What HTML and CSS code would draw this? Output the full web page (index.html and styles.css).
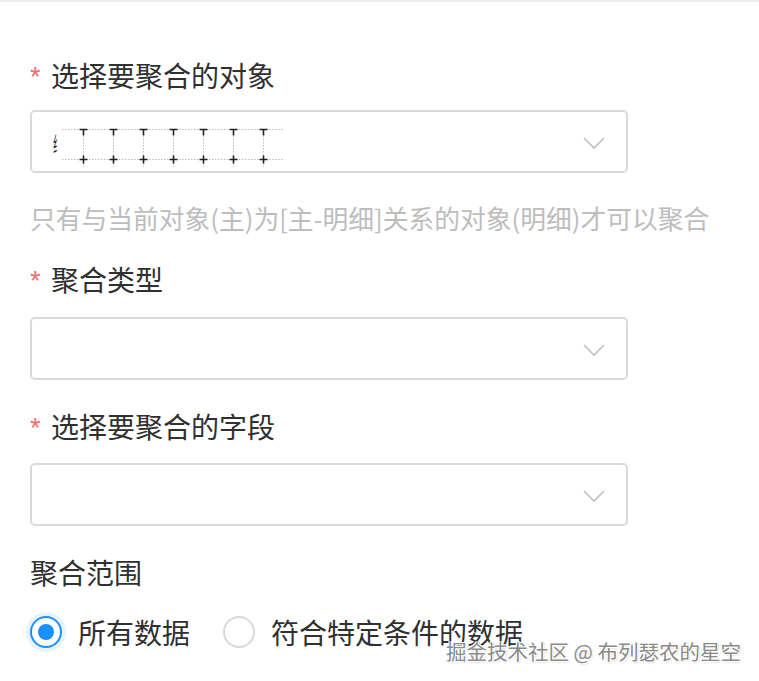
FILE: index.html
```html
<!DOCTYPE html>
<html lang="zh-CN">
<head>
<meta charset="utf-8">
<title>聚合</title>
<link rel="stylesheet" href="styles.css">
</head>
<body>
<div class="topline"></div>
<form class="form">
  <div class="label"><span class="req">*</span>选择要聚合的对象</div>
  <div class="select">
    <div class="value">
      <span class="partial">纟</span>
      <svg class="glitch" width="224" height="42" viewBox="0 0 224 42">
        <g stroke="#bdbdbd" stroke-width="1" stroke-dasharray="1.5 1.5" fill="none">
          <line x1="0" y1="4.5" x2="222" y2="4.5"/>
          <line x1="0" y1="34.5" x2="222" y2="34.5"/>
          <line x1="21.5" y1="5" x2="21.5" y2="42"/>
          <line x1="51.5" y1="5" x2="51.5" y2="42"/>
          <line x1="81.5" y1="5" x2="81.5" y2="42"/>
          <line x1="111.5" y1="5" x2="111.5" y2="42"/>
          <line x1="141.5" y1="5" x2="141.5" y2="42"/>
          <line x1="171.5" y1="5" x2="171.5" y2="42"/>
          <line x1="201.5" y1="5" x2="201.5" y2="42"/>
        </g>
        <g stroke="#222" stroke-width="1.6" fill="none">
          <path d="M17.5 4.5h8M21.5 4.5v6"/>
          <path d="M47.5 4.5h8M51.5 4.5v6"/>
          <path d="M77.5 4.5h8M81.5 4.5v6"/>
          <path d="M107.5 4.5h8M111.5 4.5v6"/>
          <path d="M137.5 4.5h8M141.5 4.5v6"/>
          <path d="M167.5 4.5h8M171.5 4.5v6"/>
          <path d="M197.5 4.5h8M201.5 4.5v6"/>
          <path d="M17.5 34.5h8M21.5 30.5v8"/>
          <path d="M47.5 34.5h8M51.5 30.5v8"/>
          <path d="M77.5 34.5h8M81.5 30.5v8"/>
          <path d="M107.5 34.5h8M111.5 30.5v8"/>
          <path d="M137.5 34.5h8M141.5 30.5v8"/>
          <path d="M167.5 34.5h8M171.5 30.5v8"/>
          <path d="M197.5 34.5h8M201.5 30.5v8"/>
        </g>
      </svg>
    </div>
    <svg class="chev" width="22" height="14" viewBox="0 0 22 14"><path d="M1 2l10 10L21 2" fill="none" stroke="#c0c0c0" stroke-width="1.6"/></svg>
  </div>
  <div class="hint">只有与当前对象(主)为[主-明细]关系的对象(明细)才可以聚合</div>

  <div class="label label-2"><span class="req">*</span>聚合类型</div>
  <div class="select">
    <div class="value"></div>
    <svg class="chev" width="22" height="14" viewBox="0 0 22 14"><path d="M1 2l10 10L21 2" fill="none" stroke="#c0c0c0" stroke-width="1.6"/></svg>
  </div>

  <div class="label label-3"><span class="req">*</span>选择要聚合的字段</div>
  <div class="select">
    <div class="value"></div>
    <svg class="chev" width="22" height="14" viewBox="0 0 22 14"><path d="M1 2l10 10L21 2" fill="none" stroke="#c0c0c0" stroke-width="1.6"/></svg>
  </div>

  <div class="label label-plain">聚合范围</div>
  <div class="radios">
    <label class="radio checked"><span class="dot"></span>所有数据</label>
    <label class="radio"><span class="dot"></span>符合特定条件的数据</label>
  </div>
</form>
<div class="watermark">掘金技术社区 @ 布列瑟农的星空</div>
</body>
</html>
```
FILE: styles.css
```css
html, body {
  margin: 0;
  padding: 0;
  background: #ffffff;
}
body {
  font-family: "Noto Sans CJK SC", "Noto Sans", sans-serif;
  color: #333333;
  width: 759px;
  height: 681px;
  overflow: hidden;
  position: relative;
}
.topline {
  height: 2px;
  background: #eeeeee;
}
.form {
  padding: 53px 0 0 30px;
}
.label {
  font-size: 28px;
  line-height: 40px;
  height: 40px;
  display: flex;
  align-items: center;
  color: #303030;
  margin-bottom: 15px;
}
.req {
  font-family: "Liberation Sans", sans-serif;
  color: #f56c6c;
  font-size: 27px;
  width: 21px;
  position: relative;
  top: 2px;
}
.label-2 {
  margin-top: 23px;
  margin-bottom: 18px;
}
.label-3 {
  margin-top: 26px;
  margin-bottom: 17px;
}
.label-plain {
  margin-top: 26px;
  margin-bottom: 20px;
}
.select {
  box-sizing: border-box;
  width: 598px;
  height: 63px;
  border: 2px solid #dadada;
  border-radius: 5px;
  display: flex;
  align-items: center;
  justify-content: space-between;
  padding: 0 21px 0 21px;
}
.value {
  display: flex;
  align-items: center;
  height: 42px;
}
.partial {
  display: inline-block;
  font-size: 22px;
  line-height: 42px;
  color: #222;
  transform: scaleX(0.35);
  transform-origin: left center;
  margin-right: -13px;
}
.glitch {
  display: block;
  margin-top: 8px;
}
.chev {
  display: block;
  margin-top: 2px;
}
.hint {
  font-size: 25.75px;
  line-height: 36px;
  color: #bdbdbd;
  margin-top: 27px;
  white-space: nowrap;
}
.radios {
  display: flex;
  align-items: center;
  height: 40px;
  gap: 33px;
}
.radio {
  display: flex;
  align-items: center;
  font-size: 28px;
  color: #303030;
  gap: 16px;
}
.dot {
  box-sizing: border-box;
  width: 32px;
  height: 32px;
  border-radius: 50%;
  border: 2px solid #d9d9d9;
  background: #fff;
  display: flex;
  align-items: center;
  justify-content: center;
}
.radio.checked .dot {
  border-color: #1890ff;
  box-shadow: 0 0 0 4px rgba(24, 144, 255, 0.1);
}
.radio.checked .dot::after {
  content: "";
  width: 16px;
  height: 16px;
  border-radius: 50%;
  background: #1890ff;
}
.watermark {
  position: absolute;
  left: 446px;
  top: 636px;
  font-size: 20.5px;
  line-height: 30px;
  color: #8a8a8a;
  text-shadow: 1px 1px 0 #fff, -1px -1px 0 #fff, 1px -1px 0 #fff, -1px 1px 0 #fff, 1px 1px 2px rgba(0,0,0,0.3);
  white-space: nowrap;
}
```
